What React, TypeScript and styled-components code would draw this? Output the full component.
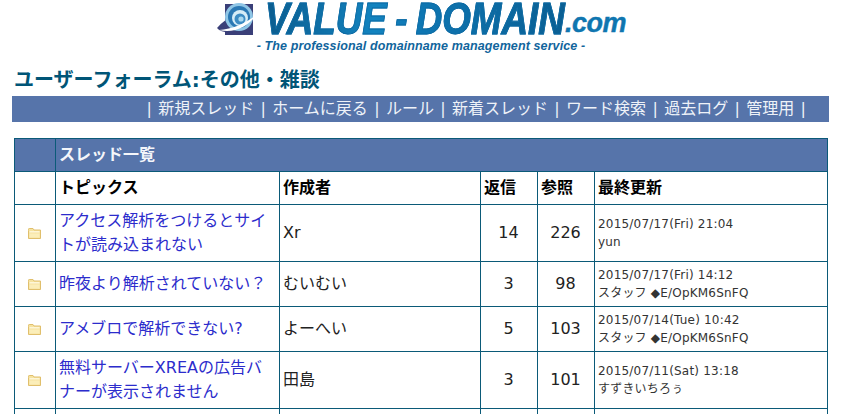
import React from "react";
import styled, { createGlobalStyle } from "styled-components";

const GlobalStyle = createGlobalStyle`
  html, body {
    margin: 0;
    padding: 0;
    height: 414px;
    overflow: hidden;
    background: #fff;
    font-family: "DejaVu Sans", "Noto Sans CJK JP", sans-serif;
    color: #222;
  }
`;

// Styled Components
const Page = styled.div`
  padding: 0 12px;
`;

const LogoBlock = styled.header`
  height: 56px;
  display: flex;
  flex-direction: column;
  align-items: center;
  padding-left: 1px;
`;

const LogoRow = styled.div`
  height: 38px;
  display: flex;
  align-items: center;
  gap: 7px;
`;

const LogoWords = styled.div`
  font-family: "Liberation Sans", sans-serif;
  font-size: 44px;
  line-height: 38px;
  font-weight: 700;
  font-style: italic;
  white-space: nowrap;
  width: 362px;
  margin-right: -69px;
  transform: scaleX(0.835);
  transform-origin: left center;
  background: linear-gradient(90deg, #0b5c8e 0%, #1283bf 36%, #0e76b2 52%, #0a5e92 100%);
  -webkit-background-clip: text;
  background-clip: text;
  color: transparent;
  -webkit-text-stroke: 0.9px #0d6aa3;
`;

const LogoDash = styled.span`
  margin: 0 10px;
`;

const LogoDomain = styled.div`
  font-family: "Liberation Sans", sans-serif;
  font-size: 27px;
  line-height: 38px;
  padding-top: 8px;
  font-weight: 700;
  font-style: italic;
  letter-spacing: -0.5px;
  color: #0f76b0;
  -webkit-text-stroke: 0.4px #0f76b0;
`;

const LogoTagline = styled.div`
  font-family: "Liberation Sans", sans-serif;
  font-size: 12.5px;
  line-height: 16px;
  font-weight: 700;
  font-style: italic;
  letter-spacing: 0.11px;
  color: #11659c;
  white-space: nowrap;
`;

const Title = styled.h1`
  margin: 10px 0 2px 2px;
  font-size: 20px;
  line-height: 28px;
  font-weight: 700;
  color: #005577;
`;

const NavBar = styled.nav`
  height: 26px;
  background: #5674aa;
  color: #eef2f8;
  font-size: 16px;
  line-height: 26px;
  text-align: right;
  padding-right: 23px;
  white-space: nowrap;
  word-spacing: 1.25px;
`;

const NavLink = styled.a`
  color: inherit;
  text-decoration: none;
`;

const ThreadTable = styled.table`
  width: 813px;
  margin: 16px 0 0 2px;
  border-collapse: collapse;
  table-layout: fixed;
`;

const Cell = styled.td<{ $center?: boolean }>`
  border: 1px solid #0b5a78;
  padding: 4px 4px 4px 3px;
  font-size: 16px;
  line-height: 24px;
  vertical-align: middle;
  text-align: ${(p) => (p.$center ? "center" : "left")};
`;

const BannerCell = styled(Cell)`
  background: #5674aa;
  color: #f4f6fa;
  font-weight: 700;
`;

const HeadCell = styled(Cell).attrs({ as: "th" })`
  background: #fff;
  color: #000;
  font-weight: 700;
`;

const TopicLink = styled.a`
  color: #2c2ccc;
  text-decoration: none;
`;

const LastUpdate = styled(Cell)`
  font-size: 12px;
  line-height: 18px;
  letter-spacing: 0.2px;
  color: #333;
`;

const FolderWrap = styled.span`
  display: block;
  height: 14px;
  margin-top: 4px;
  line-height: 0;
`;

const StubRow = styled.tr`
  height: 40px;
`;

const LogoMark = () => (
  <svg width="42" height="36" viewBox="0 0 42 36">
    <rect x="9" y="3" width="28" height="31" fill="#3a3f78" />
    <path d="M1 27 C6 21 11 18 16 15 L22 30 C14 32 5 32 1 27Z" fill="#3a3f78" />
    <circle cx="23" cy="16" r="14" fill="#8fc6e6" />
    <circle cx="23" cy="16" r="11" fill="#2a78b4" />
    <circle cx="24" cy="17" r="8" fill="#d5ecf7" />
    <circle cx="24" cy="18" r="5.5" fill="#3d8cc4" />
    <circle cx="25" cy="18" r="2.6" fill="#a9d8ef" />
    <path d="M3 29 C16 28 31 22 41 13 C33 25 18 33 3 29Z" fill="#fff" />
  </svg>
);

const FolderIcon = () => (
  <svg width="13" height="11" viewBox="0 0 13 11">
    <path d="M0.5 2.5V1.2Q0.5 0.5 1.2 0.5H5L6 2H12.5V10.5H0.5Z" fill="#f6e3a0" stroke="#e0bf6c" />
    <rect x="1.5" y="3" width="10" height="1.5" fill="#fdf6d8" />
    <rect x="1.5" y="5.5" width="10" height="4" fill="#fbeeb9" />
  </svg>
);

type Thread = {
  title: string[];
  author: string;
  replies: number;
  views: number;
  date: string;
  by: string;
};

const threads: Thread[] = [
  {
    title: ["アクセス解析をつけるとサイ", "トが読み込まれない"],
    author: "Xr",
    replies: 14,
    views: 226,
    date: "2015/07/17(Fri) 21:04",
    by: "yun",
  },
  {
    title: ["昨夜より解析されていない？"],
    author: "むいむい",
    replies: 3,
    views: 98,
    date: "2015/07/17(Fri) 14:12",
    by: "スタッフ ◆E/OpKM6SnFQ",
  },
  {
    title: ["アメブロで解析できない?"],
    author: "よーへい",
    replies: 5,
    views: 103,
    date: "2015/07/14(Tue) 10:42",
    by: "スタッフ ◆E/OpKM6SnFQ",
  },
  {
    title: ["無料サーバーXREAの広告バ", "ナーが表示されません"],
    author: "田島",
    replies: 3,
    views: 101,
    date: "2015/07/11(Sat) 13:18",
    by: "すずきいちろぅ",
  },
];

const navItems = ["新規スレッド", "ホームに戻る", "ルール", "新着スレッド", "ワード検索", "過去ログ", "管理用"];

const App = () => {
  return (
    <Page>
      <GlobalStyle />
      <LogoBlock>
        <LogoRow>
          <LogoMark />
          <LogoWords>
            VALUE<LogoDash>-</LogoDash>DOMAIN
          </LogoWords>
          <LogoDomain>.com</LogoDomain>
        </LogoRow>
        <LogoTagline>- The professional domainname management service -</LogoTagline>
      </LogoBlock>
      <Title>ユーザーフォーラム:その他・雑談</Title>
      <NavBar>
        |{" "}
        {navItems.map((item) => (
          <React.Fragment key={item}>
            <NavLink href="#">{item}</NavLink> |{" "}
          </React.Fragment>
        ))}
      </NavBar>
      <ThreadTable>
        <colgroup>
          <col style={{ width: 41 }} />
          <col style={{ width: 224 }} />
          <col style={{ width: 201 }} />
          <col style={{ width: 57 }} />
          <col style={{ width: 57 }} />
          <col style={{ width: 233 }} />
        </colgroup>
        <tbody>
          <tr>
            <BannerCell />
            <BannerCell colSpan={5}>スレッド一覧</BannerCell>
          </tr>
          <tr>
            <HeadCell />
            <HeadCell>トピックス</HeadCell>
            <HeadCell>作成者</HeadCell>
            <HeadCell>返信</HeadCell>
            <HeadCell>参照</HeadCell>
            <HeadCell>最終更新</HeadCell>
          </tr>
          {threads.map((t) => (
            <tr key={t.date}>
              <Cell $center>
                <FolderWrap>
                  <FolderIcon />
                </FolderWrap>
              </Cell>
              <Cell>
                <TopicLink href="#">
                  {t.title.map((line, i) => (
                    <React.Fragment key={line}>
                      {i > 0 && <br />}
                      {line}
                    </React.Fragment>
                  ))}
                </TopicLink>
              </Cell>
              <Cell>{t.author}</Cell>
              <Cell $center>{t.replies}</Cell>
              <Cell $center>{t.views}</Cell>
              <LastUpdate>
                {t.date}
                <br />
                {t.by}
              </LastUpdate>
            </tr>
          ))}
          <StubRow>
            <Cell />
            <Cell />
            <Cell />
            <Cell />
            <Cell />
            <Cell />
          </StubRow>
        </tbody>
      </ThreadTable>
    </Page>
  );
};

export default App;
